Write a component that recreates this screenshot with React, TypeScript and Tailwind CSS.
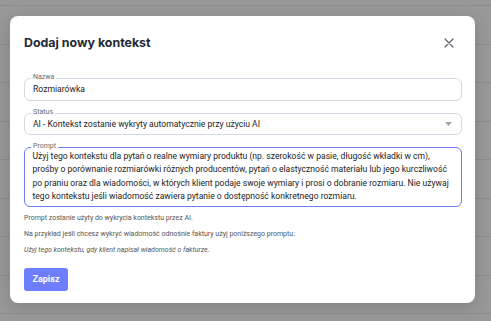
import React from "react";

function Field({ label, children, focused, className = "" }: { label: string; children: React.ReactNode; focused?: boolean; className?: string }) {
  return (
    <div className={`relative ${className}`}>
      <div
        className={`rounded-[6px] ${focused ? "border-[1.5px] border-[#6d7cf8]" : "border border-[#d5d9e3]"} `}
      >
        {children}
      </div>
      <span className="absolute left-[7px] top-[-5px] bg-white px-[2px] text-[7px] leading-[9px] text-[#6b6b6b]">
        {label}
      </span>
    </div>
  );
}

export default function App() {
  const rows = Array.from({ length: 9 });
  return (
    <div
      className="relative w-[491px] h-[321px] overflow-hidden bg-[#989898]"
      style={{ fontFamily: "Roboto, 'Noto Sans', sans-serif" }}
    >
      <div className="flex flex-col pt-[5px]">
        {rows.map((_, i) => (
          <div key={i} className="h-[38.5px] border-t border-[#8c8c8c] shrink-0" />
        ))}
      </div>

      <div className="absolute left-[10px] top-[16px] w-[465px] h-[287px] rounded-[8px] bg-white shadow-[0_4px_16px_rgba(0,0,0,0.15)] pl-[14px] pr-[13px] pt-[18px]">
        <div className="flex items-center justify-between h-[18px]">
          <h2
            className="text-[12.4px] font-bold text-[#1f2937]"
            style={{ fontFamily: "Inter, Roboto, sans-serif" }}
          >
            Dodaj nowy kontekst
          </h2>
          <svg width="10" height="10" viewBox="0 0 10 10" className="mr-[8px]">
            <path d="M1 1L9 9M9 1L1 9" stroke="#5b6473" strokeWidth="1.2" strokeLinecap="round" />
          </svg>
        </div>

        <Field label="Nazwa" className="mt-[26px]">
          <div className="h-[21px] flex items-center pl-[8px] text-[8.6px] text-[#222]">Rozmiarówka</div>
        </Field>

        <Field label="Status" className="mt-[12px]">
          <div className="h-[20px] flex items-center justify-between pl-[8px] pr-[9px] text-[8.6px] text-[#222]">
            <span>AI - Kontekst zostanie wykryty automatycznie przy użyciu AI</span>
            <svg width="7" height="4" viewBox="0 0 7 4">
              <path d="M0 0H7L3.5 4Z" fill="#a3a3a3" />
            </svg>
          </div>
        </Field>

        <Field label="Prompt" focused className="mt-[12px]">
          <div className="h-[58px] pl-[7.5px] pr-[8px] pt-[2px] text-[8.6px] leading-[13.4px] text-[#222]">
            Użyj tego kontekstu dla pytań o realne wymiary produktu (np. szerokość w pasie, długość wkładki w cm), prośby o porównanie rozmiarówki różnych producentów, pytań o elastyczność materiału lub jego kurczliwość po praniu oraz dla wiadomości, w których klient podaje swoje wymiary i prosi o dobranie rozmiaru. Nie używaj tego kontekstu jeśli wiadomość zawiera pytanie o dostępność konkretnego rozmiaru.
          </div>
        </Field>

        <div className="mt-[7px] flex flex-col gap-[7px] text-[7px] leading-[9px] text-[#555]">
          <p>Prompt zostanie użyty do wykrycia kontekstu przez AI.</p>
          <p>Na przykład jeśli chcesz wykryć wiadomość odnośnie faktury użyj poniższego promptu:</p>
          <p className="italic">Użyj tego kontekstu, gdy klient napisał wiadomość o fakturze.</p>
        </div>

        <button className="mt-[13px] w-[44px] h-[23px] rounded-[3px] bg-[#6e7dfc] text-white text-[9px] font-bold flex items-center justify-center">
          Zapisz
        </button>
      </div>
    </div>
  );
}
